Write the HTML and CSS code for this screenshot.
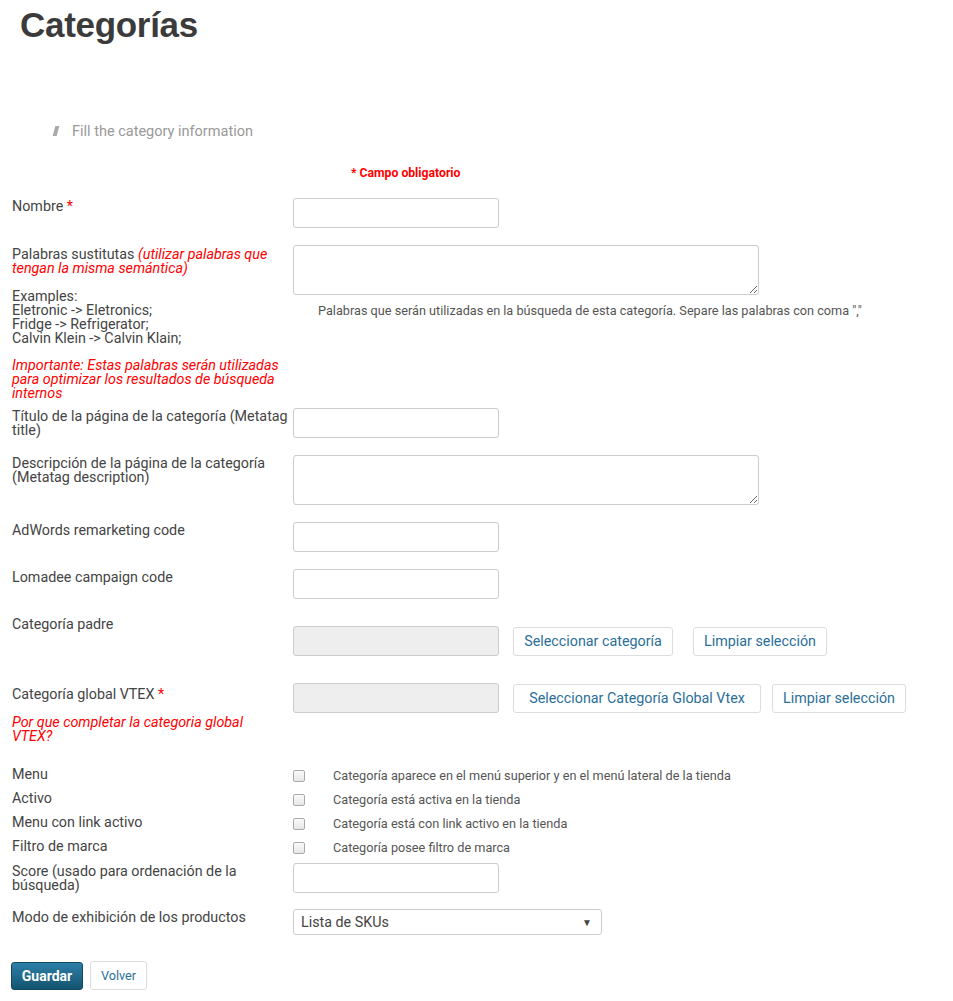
FILE: index.html
```html
<!DOCTYPE html>
<html lang="es">
<head>
<meta charset="utf-8">
<title>Categorías</title>
<link rel="stylesheet" href="styles.css">
</head>
<body>
<h1 class="page-title">Categorías</h1>

<div class="section-head">
  <span class="section-mark"></span>
  <span class="section-text">Fill the category information</span>
</div>

<p class="required-note">* Campo obligatorio</p>

<form class="form">
  <div class="row row-nombre">
    <div class="label">Nombre <span class="req">*</span></div>
    <div class="control"><input class="text" type="text"></div>
  </div>

  <div class="row row-palabras">
    <div class="label">
      <div class="lead">Palabras sustitutas <em class="red">(utilizar palabras que tengan la misma semántica)</em></div>
      <div class="examples">Examples:<br>Eletronic -&gt; Eletronics;<br>Fridge -&gt; Refrigerator;<br>Calvin Klein -&gt; Calvin Klain;</div>
      <div class="red italic important">Importante: Estas palabras serán utilizadas para optimizar los resultados de búsqueda internos</div>
    </div>
    <div class="control">
      <textarea class="area"></textarea>
      <div class="help">Palabras que serán utilizadas en la búsqueda de esta categoría. Separe las palabras con coma ","</div>
    </div>
  </div>

  <div class="row row-titulo">
    <div class="label">Título de la página de la categoría (Metatag title)</div>
    <div class="control"><input class="text" type="text"></div>
  </div>

  <div class="row row-desc">
    <div class="label">Descripción de la página de la categoría (Metatag description)</div>
    <div class="control"><textarea class="area"></textarea></div>
  </div>

  <div class="row row-adwords">
    <div class="label">AdWords remarketing code</div>
    <div class="control"><input class="text" type="text"></div>
  </div>

  <div class="row row-lomadee">
    <div class="label">Lomadee campaign code</div>
    <div class="control"><input class="text" type="text"></div>
  </div>

  <div class="row row-padre">
    <div class="label">Categoría padre</div>
    <div class="control control-buttons">
      <input class="text disabled" type="text" disabled>
      <button type="button" class="btn btn-sel-cat">Seleccionar categoría</button>
      <button type="button" class="btn btn-clear btn-clear-wide">Limpiar selección</button>
    </div>
  </div>

  <div class="row row-global">
    <div class="label">
      <div>Categoría global VTEX <span class="req">*</span></div>
      <div class="red italic why">Por que completar la categoria global VTEX?</div>
    </div>
    <div class="control control-buttons">
      <input class="text disabled" type="text" disabled>
      <button type="button" class="btn btn-sel-global">Seleccionar Categoría Global Vtex</button>
      <button type="button" class="btn btn-clear btn-clear-tight">Limpiar selección</button>
    </div>
  </div>

  <div class="row row-check">
    <div class="label">Menu</div>
    <div class="control check"><span class="box"></span><span class="check-text">Categoría aparece en el menú superior y en el menú lateral de la tienda</span></div>
  </div>
  <div class="row row-check">
    <div class="label">Activo</div>
    <div class="control check"><span class="box"></span><span class="check-text">Categoría está activa en la tienda</span></div>
  </div>
  <div class="row row-check">
    <div class="label">Menu con link activo</div>
    <div class="control check"><span class="box"></span><span class="check-text">Categoría está con link activo en la tienda</span></div>
  </div>
  <div class="row row-check">
    <div class="label">Filtro de marca</div>
    <div class="control check"><span class="box"></span><span class="check-text">Categoría posee filtro de marca</span></div>
  </div>

  <div class="row row-score">
    <div class="label">Score (usado para ordenación de la búsqueda)</div>
    <div class="control"><input class="text" type="text"></div>
  </div>

  <div class="row row-modo">
    <div class="label">Modo de exhibición de los productos</div>
    <div class="control">
      <div class="select"><span>Lista de SKUs</span><span class="caret">▼</span></div>
    </div>
  </div>

  <div class="actions">
    <button type="button" class="btn-primary">Guardar</button>
    <button type="button" class="btn btn-small">Volver</button>
  </div>
</form>
</body>
</html>
```

FILE: styles.css
```css
* { box-sizing: border-box; }

body {
  margin: 0;
  background: #fff;
  color: #444;
  font-family: Roboto, "Liberation Sans", sans-serif;
  font-size: 14.3px;
}

.page-title {
  margin: 0;
  padding: 5px 0 0 20px;
  font-family: "Liberation Sans", Arial, sans-serif;
  font-weight: bold;
  font-size: 35px;
  line-height: 40px;
  color: #3b3b3b;
  letter-spacing: -0.3px;
}

.section-head {
  display: flex;
  align-items: center;
  margin: 77px 0 0 54px;
  height: 18px;
}
.section-mark {
  width: 4px;
  height: 10px;
  background: #aaa;
  transform: skewX(-15deg);
  margin-right: 14px;
}
.section-text {
  color: #999;
  font-size: 14.5px;
}

.required-note {
  margin: 26px 0 0 351px;
  color: #f00;
  font-weight: bold;
  font-size: 12.2px;
  line-height: 14px;
}

.form {
  padding: 18px 0 0 12px;
}

.row {
  display: flex;
  align-items: flex-start;
}
.label {
  width: 281px;
  flex: none;
  line-height: 14px;
  color: #444;
  padding-top: 1px;
}
.req { color: #f00; }
.red { color: #f00; }
.italic, em { font-style: italic; }
.examples { margin-top: 14px; }
.important { margin-top: 13px; }
.why { margin-top: 14px; max-width: 252px; }

.control { flex: none; }

.text {
  display: block;
  width: 206px;
  height: 30px;
  border: 1px solid #ccc;
  border-radius: 3px;
  background: #fff;
  font: inherit;
  padding: 4px 6px;
}
.text.disabled {
  background: #eee;
  border-color: #ccc;
}
.area {
  display: block;
  width: 466px;
  height: 50px;
  border: 1px solid #ccc;
  border-radius: 3px;
  font: inherit;
  resize: vertical;
}
.help {
  margin: 9px 0 0 25px;
  font-size: 12.7px;
  color: #555;
  line-height: 14px;
}

.row-nombre { height: 47px; }
.row-palabras .label { padding-top: 2px; }
.row-titulo { margin-top: 8px; height: 47px; }
.row-desc { height: 67px; }
.row-adwords { height: 47px; }
.row-lomadee { height: 47px; }
.row-padre { height: 67px; }
.row-padre .control { margin-top: 10px; }
.row-global { height: 84px; }
.row-global .label { padding-top: 4px; }

.control-buttons {
  display: flex;
  align-items: center;
}
.btn {
  height: 29px;
  padding: 0;
  border: 1px solid #ddd;
  border-radius: 3px;
  background: #fff;
  color: #2a6f99;
  font-family: Roboto, "Liberation Sans", sans-serif;
  font-size: 14.3px;
  line-height: 27px;
  text-align: center;
  cursor: pointer;
}
.btn-sel-cat { width: 160px; margin-left: 14px; }
.btn-sel-global { width: 248px; margin-left: 14px; }
.btn-clear { width: 134px; }
.btn-clear-wide { margin-left: 20px; }
.btn-clear-tight { margin-left: 11px; }

.row-check { height: 24px; }
.row-check .label { padding-top: 0; }
.check {
  display: flex;
  align-items: center;
  height: 14px;
  margin-top: 1px;
}
.box {
  width: 12px;
  height: 12px;
  border: 1px solid #aaa;
  border-radius: 2px;
  background: linear-gradient(#fafafa, #e6e6e6);
  margin-top: 2px;
}
.check-text {
  margin-left: 28px;
  font-size: 12.7px;
  color: #555;
}

.row-score { height: 47px; }
.row-modo { height: 52px; }
.row-modo .label { padding-top: 0; }
.row-modo .control { margin-top: -1px; }
.select {
  width: 309px;
  height: 26px;
  border: 1px solid #ccc;
  border-radius: 3px;
  display: flex;
  align-items: center;
  justify-content: space-between;
  padding: 0 9px 0 7px;
  color: #444;
}
.caret { font-size: 10px; color: #444; }

.actions {
  display: flex;
  align-items: center;
  gap: 7px;
  margin-left: -1px;
  margin-top: -1px;
}
.btn-primary {
  height: 28px;
  width: 72px;
  border: 1px solid #0f4a66;
  border-radius: 3px;
  background: linear-gradient(#2e7fa8, #14546f);
  color: #fff;
  font-family: Roboto, "Liberation Sans", sans-serif;
  font-weight: bold;
  font-size: 14px;
  cursor: pointer;
}
.btn-small {
  height: 29px;
  width: 57px;
  padding: 0;
  font-size: 12.7px;
}
```
